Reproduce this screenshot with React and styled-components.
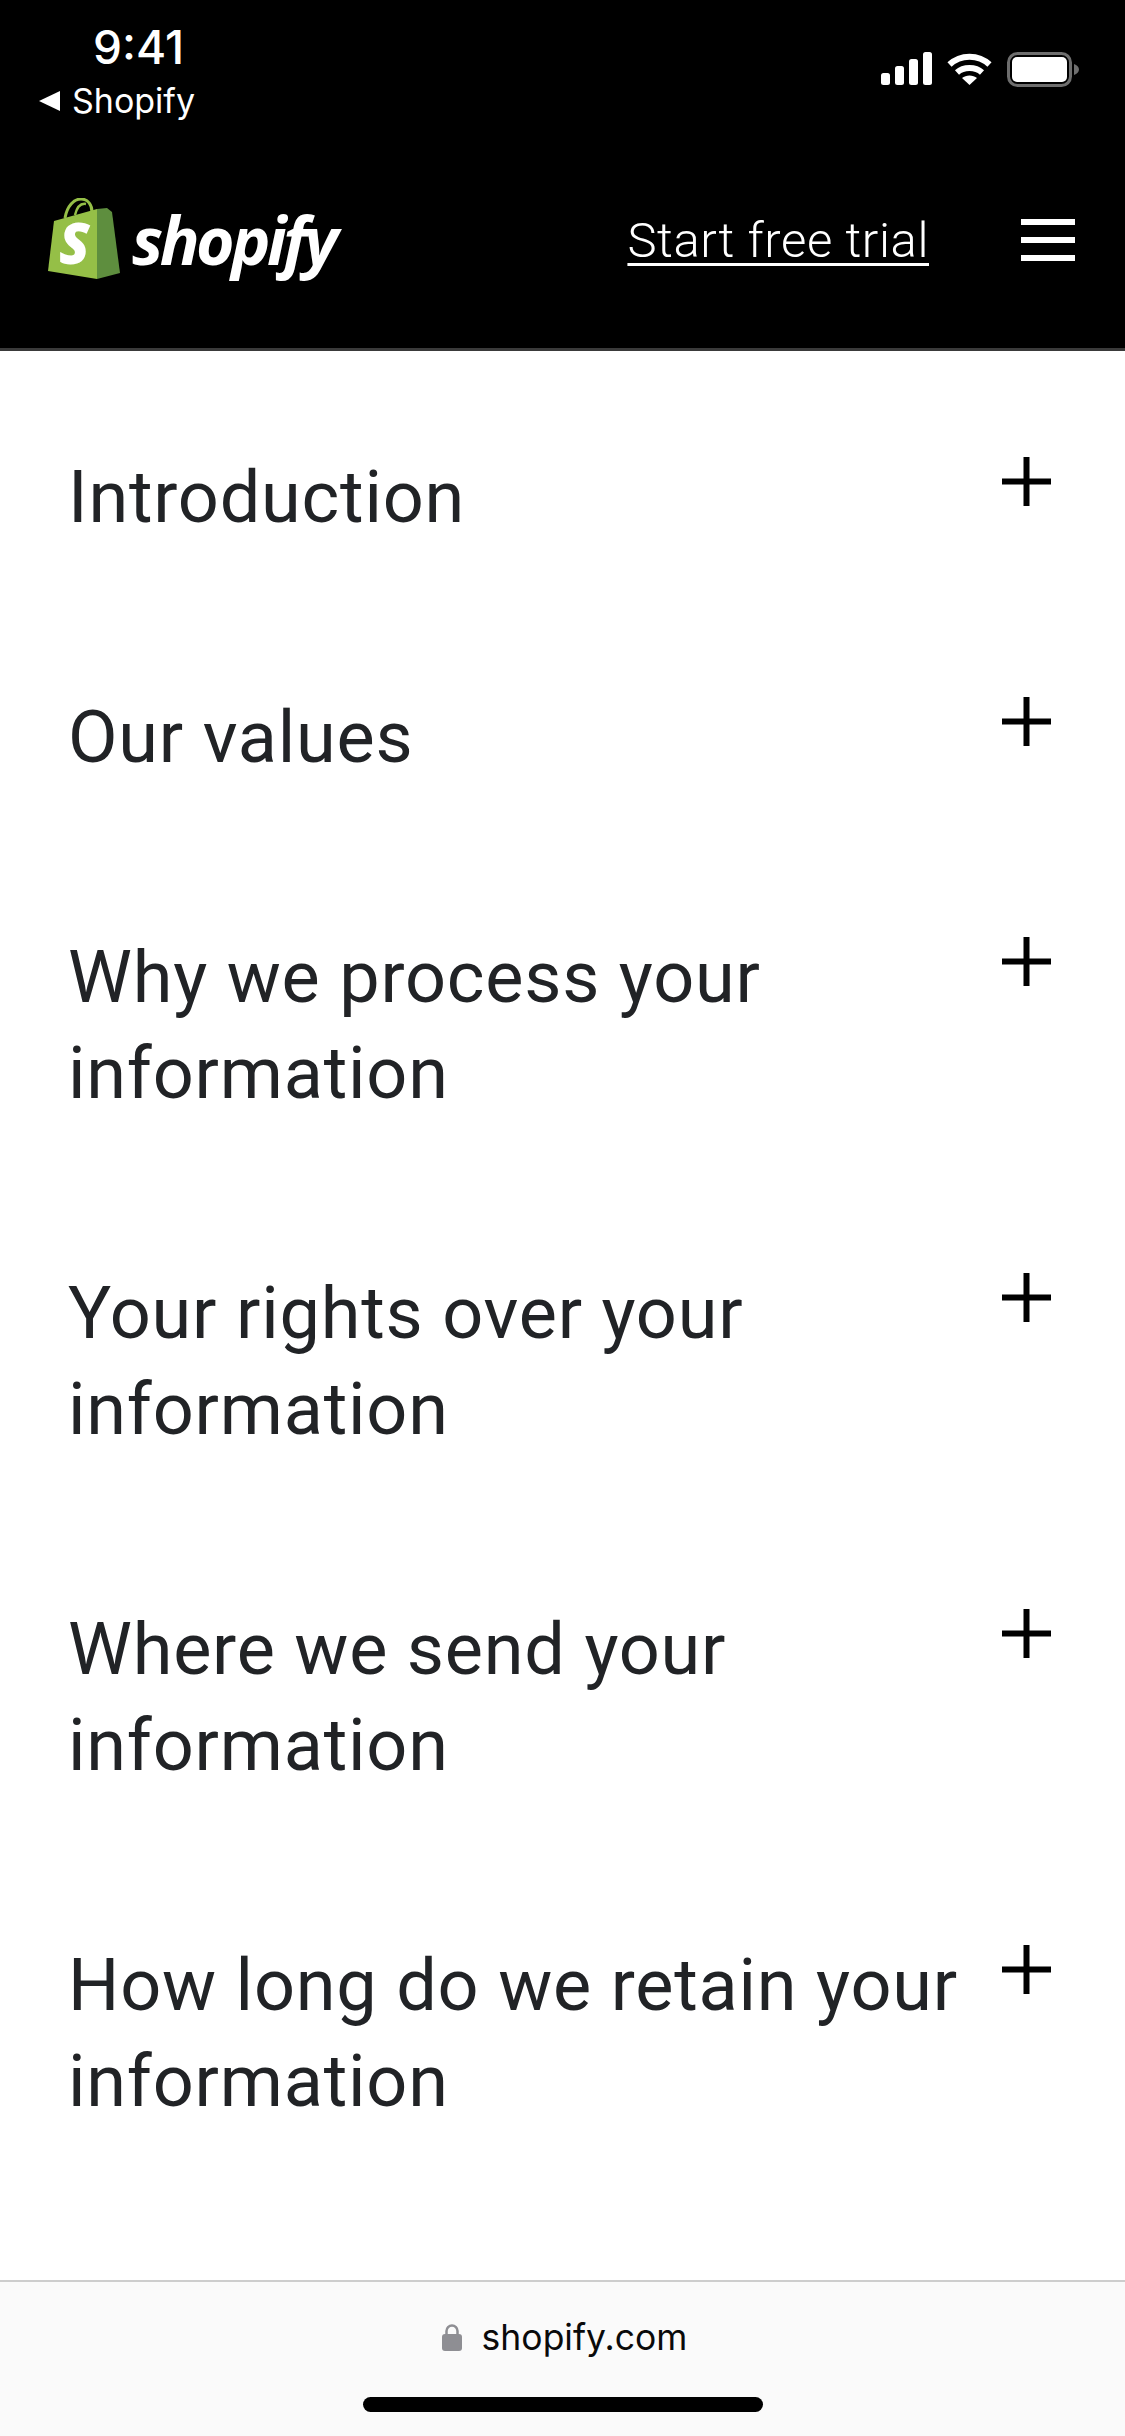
import React from 'react';
import styled, { createGlobalStyle } from 'styled-components';

const GlobalStyle = createGlobalStyle`
  html, body {
    margin: 0;
    padding: 0;
    background: #fff;
  }
  * { box-sizing: border-box; }
`;

const Page = styled.div`
  width: 1125px;
  height: 2436px;
  display: flex;
  flex-direction: column;
  overflow: hidden;
  background: #fff;
  font-family: "Inter", "Liberation Sans", sans-serif;
`;

const Header = styled.header`
  background: #000;
  color: #fff;
  border-bottom: 3px solid #3a3a3a;
  height: 351px;
  flex-shrink: 0;
`;

// status bar
const StatusBar = styled.div`
  height: 130px;
  display: flex;
  justify-content: space-between;
  padding: 22px 45px 0 39px;
`;

const StatusLeft = styled.div`
  display: flex;
  flex-direction: column;
`;

const Time = styled.div`
  font-size: 46px;
  font-weight: 500;
  line-height: 50px;
  margin-left: 54px;
`;

const BackLink = styled.div`
  display: flex;
  align-items: center;
  gap: 11px;
  font-size: 34px;
  line-height: 40px;
  margin-top: 9px;
`;

const StatusIcons = styled.div`
  display: flex;
  align-items: flex-start;
  gap: 15px;
  padding-top: 30px;
`;

// nav
const Nav = styled.nav`
  height: 218px;
  display: flex;
  align-items: center;
  justify-content: space-between;
  padding: 0 50px 0 48px;
`;

const Logo = styled.div`
  display: flex;
  align-items: center;
  gap: 12px;
`;

const Wordmark = styled.span`
  font-family: "Open Sans", sans-serif;
  font-size: 66px;
  font-weight: 700;
  font-style: italic;
  letter-spacing: -3.5px;
  line-height: 82px;
  color: #fff;
`;

const NavRight = styled.div`
  display: flex;
  align-items: center;
  gap: 92px;
`;

const TrialLink = styled.a`
  font-family: "Roboto", sans-serif;
  font-size: 49px;
  font-weight: 300;
  letter-spacing: 0.6px;
  margin-top: 3px;
  color: #fff;
  text-decoration: underline;
  text-decoration-thickness: 3px;
  text-underline-offset: 6px;
`;

const Burger = styled.div`
  width: 54px;
  margin-top: 2px;
  display: flex;
  flex-direction: column;
  gap: 12px;
`;

const BurgerBar = styled.span`
  display: block;
  height: 6px;
  background: #fff;
`;

// accordion
const SectionList = styled.main`
  flex: 1;
  padding-top: 27px;
`;

const Row = styled.div`
  display: flex;
  justify-content: space-between;
  align-items: flex-start;
  padding: 72px 74px 72px 68px;
`;

const RowTitle = styled.div`
  width: 900px;
  font-family: "Roboto", sans-serif;
  font-size: 72px;
  font-weight: 400;
  letter-spacing: 0.8px;
  line-height: 96px;
  color: #212326;
`;

const PlusIcon = styled.svg`
  width: 49px;
  height: 49px;
  margin-top: 7px;
  flex-shrink: 0;
`;

// safari bottom bar
const UrlBar = styled.footer`
  height: 156px;
  flex-shrink: 0;
  background: #fafafa;
  border-top: 2px solid #cdcdcd;
  display: flex;
  flex-direction: column;
  align-items: center;
`;

const UrlRow = styled.div`
  display: flex;
  align-items: center;
  gap: 20px;
  height: 48px;
  margin: 31px 0 0 4px;
  font-size: 35.5px;
  color: #0a0a0a;
`;

const HomeIndicator = styled.div`
  width: 400px;
  height: 15px;
  margin-top: 36px;
  border-radius: 8px;
  background: #000;
`;

const sections = [
  'Introduction',
  'Our values',
  'Why we process your information',
  'Your rights over your information',
  'Where we send your information',
  'How long do we retain your information',
];

const ShopifyBag = () => (
  <svg width="72" height="82" viewBox="0 0 72 82">
    <path d="M17 20C19 8 26 1 33 1c7 0 11 6 11 13" fill="none" stroke="#95bf47" strokeWidth="3" />
    <path d="M27 17C29 9 33 5 38 6" fill="none" stroke="#95bf47" strokeWidth="2.5" />
    <path d="M6 23L49 11V81L0 73Z" fill="#95bf47" />
    <path d="M49 11L59 10L64 14L72 75L49 81Z" fill="#5e8e3e" />
    <text x="11" y="66" fontFamily="Open Sans" fontWeight="800" fontStyle="italic" fontSize="56" fill="#fff">S</text>
  </svg>
);

const App = () => {
  return (
    <Page>
      <GlobalStyle />
      <Header>
        <StatusBar>
          <StatusLeft>
            <Time>9:41</Time>
            <BackLink>
              <svg width="22" height="22" viewBox="0 0 22 22">
                <path d="M0 11L21 1V21Z" fill="#fff" />
              </svg>
              Shopify
            </BackLink>
          </StatusLeft>
          <StatusIcons>
            <svg width="51" height="33" viewBox="0 0 51 33">
              <rect x="0" y="21" width="9" height="12" rx="2.5" fill="#fff" />
              <rect x="14" y="14" width="9" height="19" rx="2.5" fill="#fff" />
              <rect x="28" y="7" width="9" height="26" rx="2.5" fill="#fff" />
              <rect x="42" y="0" width="9" height="33" rx="2.5" fill="#fff" />
            </svg>
            <svg width="45" height="33" viewBox="0 0 45 33">
              <path d="M2.5 12.5C13.5 2 31.5 2 42.5 12.5" fill="none" stroke="#fff" strokeWidth="6" />
              <path d="M10 20.5C16.5 14.5 28.5 14.5 35 20.5" fill="none" stroke="#fff" strokeWidth="6" />
              <path d="M15 26C19 22.5 26 22.5 30 26L22.5 33Z" fill="#fff" />
            </svg>
            <svg width="73" height="35" viewBox="0 0 73 35">
              <rect x="1.5" y="1.5" width="62" height="32" rx="9" fill="none" stroke="#6e6e6e" strokeWidth="3" />
              <rect x="5" y="5" width="55" height="25" rx="5" fill="#fff" />
              <path d="M67 12c3 1 5 3 5 5.500s-2 4.500-5 5.500Z" fill="#6e6e6e" />
            </svg>
          </StatusIcons>
        </StatusBar>
        <Nav>
          <Logo>
            <ShopifyBag />
            <Wordmark>shopify</Wordmark>
          </Logo>
          <NavRight>
            <TrialLink>Start free trial</TrialLink>
            <Burger>
              <BurgerBar />
              <BurgerBar />
              <BurgerBar />
            </Burger>
          </NavRight>
        </Nav>
      </Header>

      <SectionList>
        {sections.map((title) => (
          <Row key={title}>
            <RowTitle>{title}</RowTitle>
            <PlusIcon viewBox="0 0 49 49">
              <path d="M24.500 0V49M0 24.500H49" stroke="#000" strokeWidth="6" fill="none" />
            </PlusIcon>
          </Row>
        ))}
      </SectionList>

      <UrlBar>
        <UrlRow>
          <svg width="20" height="28" viewBox="0 0 20 28">
            <path d="M4.500 13V8a5.500 5.500 0 0 1 11 0v5" fill="none" stroke="#8e8e93" strokeWidth="2.500" />
            <rect x="0" y="11" width="20" height="17" rx="3" fill="#8e8e93" />
          </svg>
          shopify.com
        </UrlRow>
        <HomeIndicator />
      </UrlBar>
    </Page>
  );
};

export default App;
